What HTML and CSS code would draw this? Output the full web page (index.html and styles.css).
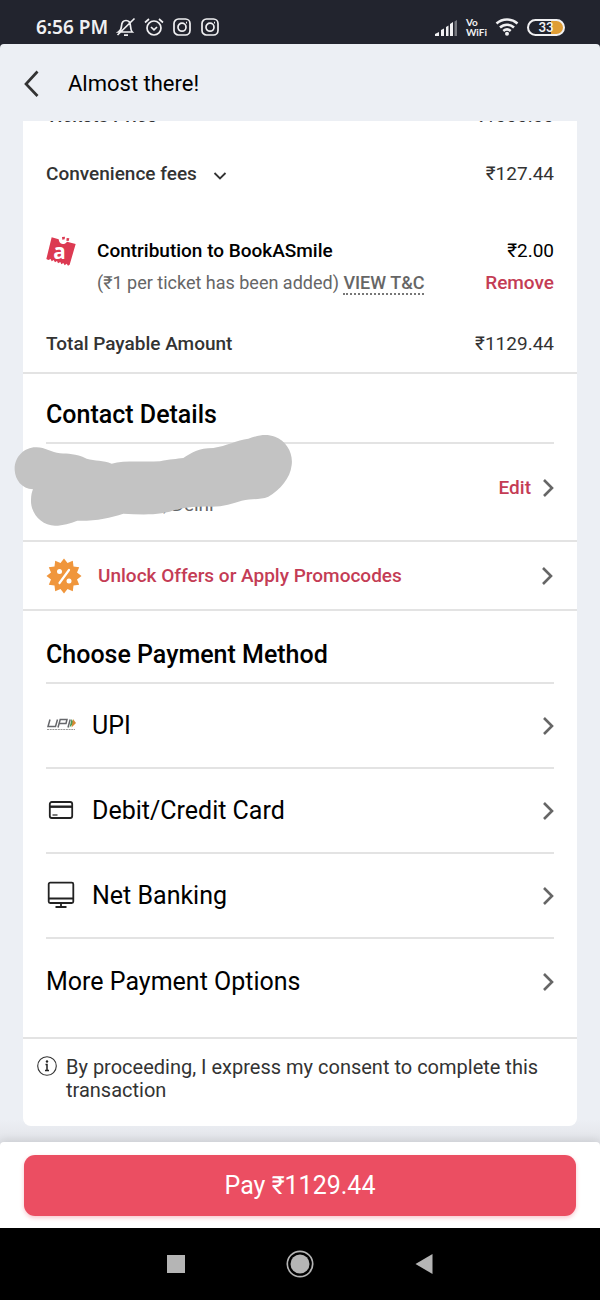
FILE: index.html
```html
<!DOCTYPE html>
<html lang="en">
<head>
<meta charset="utf-8">
<meta name="viewport" content="width=device-width, initial-scale=1">
<title>Almost there!</title>
<link rel="stylesheet" href="styles.css">
</head>
<body>
<div class="screen">
  <div class="status">
    <div class="status-side">
      <span class="clock">6:56 PM</span>
      <svg class="st" viewBox="0 0 20 20" width="20" height="20"><path d="M4.5 15h11.800c-1.600-1.700-1.600-3.200-1.800-6C14.300 5.500 12.500 3.500 10 3.500S5.700 5.500 5.500 9c-.1 3-.5 4.500-3 6zM1.500 18 18.500 1.500M8 18.200h4"/></svg>
      <svg class="st" viewBox="0 0 20 20" width="20" height="20"><circle cx="10" cy="11" r="7"/><path d="m7 10 3 2.800 3-2.800M1 5.500 5 2M19 5.500 15 2"/></svg>
      <svg class="st" viewBox="0 0 20 20" width="20" height="20"><rect x="2" y="2" width="16" height="16" rx="4.500"/><circle cx="10" cy="10.200" r="4"/><path d="M14 5.600h1"/></svg>
      <svg class="st" viewBox="0 0 20 20" width="20" height="20"><rect x="2" y="2" width="16" height="16" rx="4.500"/><circle cx="10" cy="10.200" r="4"/><path d="M14 5.600h1"/></svg>
    </div>
    <div class="status-side">
      <svg viewBox="0 0 23 17" width="23" height="17" fill="#f0f0f2"><path d="M0 17v-2l4-2v4zM6 17v-6l3-1.500V17zM11 17V8l2.500-1.500V17zM15 17V5l3-2v14z"/><path d="M19.500 17V2.500L22 1v16z" fill="#777980"/></svg>
      <span class="vowifi"><span>Vo</span><span>WiFi</span></span>
      <svg class="wifi" viewBox="0 0 24 18" width="24" height="18"><path d="M1.500 5.500c6-5.300 15-5.300 21 0M5 9.500c4-3.800 10-3.800 14 0M8.300 13c2.200-2 5.200-2 7.400 0"/><circle cx="12" cy="15.700" r="2"/></svg>
      <span class="battery">33</span>
    </div>
  </div>

  <main class="app">
    <header class="appbar">
      <button class="back" aria-label="Back"><svg viewBox="0 0 16 28" width="16" height="28"><path d="M14.500 1.500 3 14l11.500 12"/></svg></button>
      <h1>Almost there!</h1>
    </header>

    <div class="card">
      <section class="summary">
        <div class="line line-cut"><span class="label">Tickets Price</span><span>₹1000.00</span></div>
        <div class="line line-fees">
          <button class="label fees">Convenience fees <svg viewBox="0 0 14 8" width="14" height="8"><path d="m1.500 1 5.500 5.500L12.500 1"/></svg></button>
          <span>₹127.44</span>
        </div>
        <div class="donation">
          <svg class="ticket" viewBox="0 0 90 90" width="30" height="30"><path fill="#dc3a52" d="M17 4 38 10c1 8 4 13 12 14 6 0 10-2 13-7l26 7-18 62-5 3-4-6-6 5-4-7-6 4-3-7-7 4-3-7-6 4-4-7-6 4-3-7-7 3-6-3z"/><path fill="#dc3a52" d="m48 3 9-1-1 8-7 1zM62 6l8 1-2 8-7-1z"/><text x="22" y="68" class="ticket-a">a</text></svg>
          <div class="donation-text">
            <div class="line strong"><span class="label">Contribution to BookASmile</span><span>₹2.00</span></div>
            <div class="line"><span class="sub">(₹1 per ticket has been added) <a class="terms" href="#terms">VIEW T&amp;C</a></span><button class="link">Remove</button></div>
          </div>
        </div>
        <div class="line line-total"><span class="label">Total Payable Amount</span><span>₹1129.44</span></div>
      </section>

      <section class="contact">
        <h2>Contact Details</h2>
        <div class="contact-row">
          <span class="place">, Delhi</span>
          <button class="link edit">Edit <svg class="chev" viewBox="0 0 12 20" width="12" height="20"><path d="m2 2 8 8-8 8"/></svg></button>
        </div>
        <svg class="scribble" viewBox="42 135 834 273" width="278" height="91"><path fill="#c3c3c3" d="M44 240C42 200 75 170 110 172 135 172 155 188 180 190 205 192 225 190 260 206 285 213 310 210 335 221 370 211 420 216 480 214 510 207 530 207 550 204 575 188 595 174 640 174 680 167 710 151 745 146 780 134 800 132 825 140 860 153 880 190 875 225 871 265 840 300 805 320 780 330 755 325 725 332 700 340 670 350 635 350 605 349 570 350 530 358 490 376 430 375 370 371 330 384 290 393 232 392 210 400 190 407 165 407 125 407 91 370 93 330 93 315 96 305 99 298 65 296 46 270 44 240z"/></svg>
      </section>

      <a class="promo" href="#offers">
        <svg viewBox="0 0 36 36" width="36" height="36"><path fill="#f0963c" d="M18 .5 21.500 5l5.300-2.200.7 5.700 5.700.7L31 14.500l4.500 3.500-4.500 3.500 2.200 5.300-5.700.7-.7 5.700-5.300-2.200-3.500 4.500-3.500-4.500-5.300 2.200-.7-5.700-5.700-.7L5 21.500.5 18 5 14.500 2.800 9.200l5.700-.7.7-5.700L14.500 5z"/><path d="M23 12 13.500 25" stroke="#fff" stroke-width="2.200" stroke-linecap="round"/><circle cx="13.500" cy="13.500" r="2.500" fill="#fff"/><circle cx="23" cy="23" r="2.500" fill="#fff"/></svg>
        <span>Unlock Offers or Apply Promocodes</span>
        <svg class="chev" viewBox="0 0 12 20" width="12" height="20"><path d="m2 2 8 8-8 8"/></svg>
      </a>

      <section class="methods">
        <h2>Choose Payment Method</h2>
        <button class="method">
          <svg viewBox="0 0 30 30" width="30" height="30"><path d="M4 8.500 2 15.500h7.500L11.500 8.500M12 16.500l2.200-8H21l-1 4h-7M22 16.500l2.200-8" fill="none" stroke="#66676b" stroke-width="1.500"/><path d="m25.500 8 2.500 4-4.500 4.500z" fill="#4b9a53"/><path d="m27 8 3 4-4.500 4.500z" fill="#d58a35"/><path d="M1 18.500h28" stroke="#999" stroke-width="1" stroke-dasharray="2 .7"/></svg>
          <span>UPI</span><svg class="chev" viewBox="0 0 12 20" width="12" height="20"><path d="m2 2 8 8-8 8"/></svg>
        </button>
        <button class="method">
          <svg class="ico" viewBox="0 0 30 30" width="30" height="30"><rect x="3.800" y="6" width="22.400" height="16" rx="2"/><path d="M4 10.700h22" stroke-width="2.400"/><path d="M6.500 19h5" stroke-width="1.200"/></svg>
          <span>Debit/Credit Card</span><svg class="chev" viewBox="0 0 12 20" width="12" height="20"><path d="m2 2 8 8-8 8"/></svg>
        </button>
        <button class="method">
          <svg class="ico" viewBox="0 0 30 30" width="30" height="30"><rect x="2.700" y="1.700" width="24.600" height="20.300" rx="1.500"/><path d="M3 17.500h24M15 22v3.500M9.500 26h11"/></svg>
          <span>Net Banking</span><svg class="chev" viewBox="0 0 12 20" width="12" height="20"><path d="m2 2 8 8-8 8"/></svg>
        </button>
        <button class="method">
          <span>More Payment Options</span><svg class="chev" viewBox="0 0 12 20" width="12" height="20"><path d="m2 2 8 8-8 8"/></svg>
        </button>
      </section>

      <div class="consent">
        <svg viewBox="0 0 20 20" width="20" height="20"><circle cx="10" cy="10" r="9.300" fill="none" stroke="#333" stroke-width="1.100"/><circle cx="10" cy="5.500" r="1.200" fill="#222"/><path d="M8.500 8.500H10V14.500M8 14.500h4" fill="none" stroke="#222" stroke-width="1.500"/></svg>
        <p>By proceeding, I express my consent to complete this transaction</p>
      </div>
    </div>
  </main>

  <footer class="paybar"><button class="pay">Pay ₹1129.44</button></footer>

  <nav class="sysnav">
    <button aria-label="Recent apps"><svg viewBox="0 0 28 28" width="28" height="28"><path fill="#b5b5b5" d="M5 5h18v18H5z"/></svg></button>
    <button aria-label="Home"><svg viewBox="0 0 28 28" width="28" height="28"><circle cx="14" cy="14" r="12.700" fill="none" stroke="#b5b5b5" stroke-width="1.700"/><circle cx="14" cy="14" r="9.500" fill="#b5b5b5"/></svg></button>
    <button aria-label="Back"><svg viewBox="0 0 28 28" width="28" height="28"><path fill="#b5b5b5" d="M22.500 4v20L5.500 14z"/></svg></button>
  </nav>
</div>
</body>
</html>
```
FILE: styles.css
```css
* { box-sizing: border-box; }
body {
  margin: 0;
  background: #e2e4e9;
  color: #000;
  font-family: Roboto, "Noto Sans", sans-serif;
  font-size: 19px;
  line-height: 24px;
}
h1, h2, p { margin: 0; }
button {
  padding: 0;
  border: 0;
  background: none;
  color: inherit;
  font: inherit;
  text-align: left;
  cursor: pointer;
}
a { color: inherit; text-decoration: none; }
svg { display: block; flex: none; }
.screen { min-height: 100vh; display: flex; flex-direction: column; }

.status {
  display: flex;
  justify-content: space-between;
  padding: 11px 35px 5px 36px;
  height: 48px;
  background: #22242e;
  color: #f0f0f2;
}
.status-side { display: flex; align-items: center; gap: 8px; }
.clock { font-family: "Noto Sans", sans-serif; font-size: 19px; font-weight: 600; }
.st { fill: none; stroke: #f0f0f2; stroke-width: 1.7; }
.vowifi { display: grid; font-family: Lato, sans-serif; font-size: 10px; line-height: 10px; font-weight: 700; }
.wifi { fill: none; stroke: #f0f0f2; stroke-width: 2.5; }
.wifi circle { fill: #f0f0f2; stroke: none; }
.battery {
  width: 38px;
  height: 17px;
  border: 2px solid #f0f0f2;
  border-radius: 9px;
  background: linear-gradient(90deg, #22242e 22px, #df9d35 22px);
  font-family: Lato, sans-serif;
  font-size: 13px;
  font-weight: 700;
  line-height: 13px;
  text-align: center;
}

.app { flex: 1; margin-top: -4px; padding: 0 23px 15px; border-radius: 4px 4px 0 0; background: linear-gradient(#eceff4 98%, #e2e4e9); }
.appbar { display: flex; align-items: center; gap: 29px; height: 77px; padding-top: 3px; }
.back svg { fill: none; stroke: #333; stroke-width: 2.7; }
h1 { font-size: 22px; font-weight: 400; line-height: 28px; }

.card { background: #fff; border-radius: 0 0 8px 8px; }
.summary, .contact, .promo, .methods { border-bottom: 2px solid #e3e3e3; }
.summary { padding: 0 23px 16px; color: #333; }
.line { display: flex; justify-content: space-between; }
.label, .link { font-weight: 500; }
.line-cut { height: 7px; align-items: flex-end; overflow: hidden; }
.line-fees { padding-top: 34px; }
.fees { display: flex; align-items: center; gap: 16px; }
.fees svg { margin-top: 4px; fill: none; stroke: #333; stroke-width: 1.8; }
.donation { display: flex; gap: 21px; padding-top: 53px; }
.ticket { margin-top: -3px; }
.donation-text { flex: 1; display: grid; gap: 8px; }
.ticket-a { font: 700 62px "Open Sans", sans-serif; fill: #fff; }
.strong { color: #000; }
.sub { color: #666; font-size: 18px; }
.terms { border-bottom: 2px dotted #777; font-weight: 500; }
.link { color: #c43c55; }
.line-total { padding-top: 37px; }

.contact { position: relative; padding: 0 23px; }
h2 { padding: 26px 0 12px; font-size: 25px; font-weight: 500; line-height: 30px; border-bottom: 2px solid #e3e3e3; }
.contact-row { display: flex; justify-content: space-between; align-items: center; height: 96px; }
.place { padding: 26px 0 0 117px; color: #666; }
.edit { display: flex; align-items: center; gap: 11px; padding-bottom: 8px; }
.scribble { position: absolute; left: -9px; top: 61px; }
.chev { fill: none; stroke: #666; stroke-width: 2.6; }

.promo { display: flex; align-items: center; gap: 16px; height: 69px; padding: 0 24px 0 23px; color: #c43c55; font-weight: 500; }
.promo span { flex: 1; }

.methods { padding: 3px 23px 13px; }
.method { display: flex; align-items: center; gap: 16px; width: 100%; height: 85px; border-bottom: 2px solid #e3e3e3; font-size: 25px; line-height: 30px; }
.method span { flex: 1; }
.method:last-child { border-bottom: 0; }
.ico { fill: none; stroke: #222; stroke-width: 1.8; }

.consent { display: flex; gap: 9px; padding: 17px 24px 24px 14px; color: #333; font-size: 20px; line-height: 23px; }

.paybar { padding: 13px 24px 12px; background: #fff; border-radius: 4px 4px 0 0; box-shadow: 0 -2px 8px #0000001a; }
.pay { width: 100%; height: 61px; border-radius: 11px; background: #eb4e62; color: #fff; font-size: 25px; text-align: center; box-shadow: 0 2px 4px #eb4e6250; }

.sysnav { display: flex; justify-content: center; align-items: center; gap: 96px; height: 72px; background: #000; }
```
